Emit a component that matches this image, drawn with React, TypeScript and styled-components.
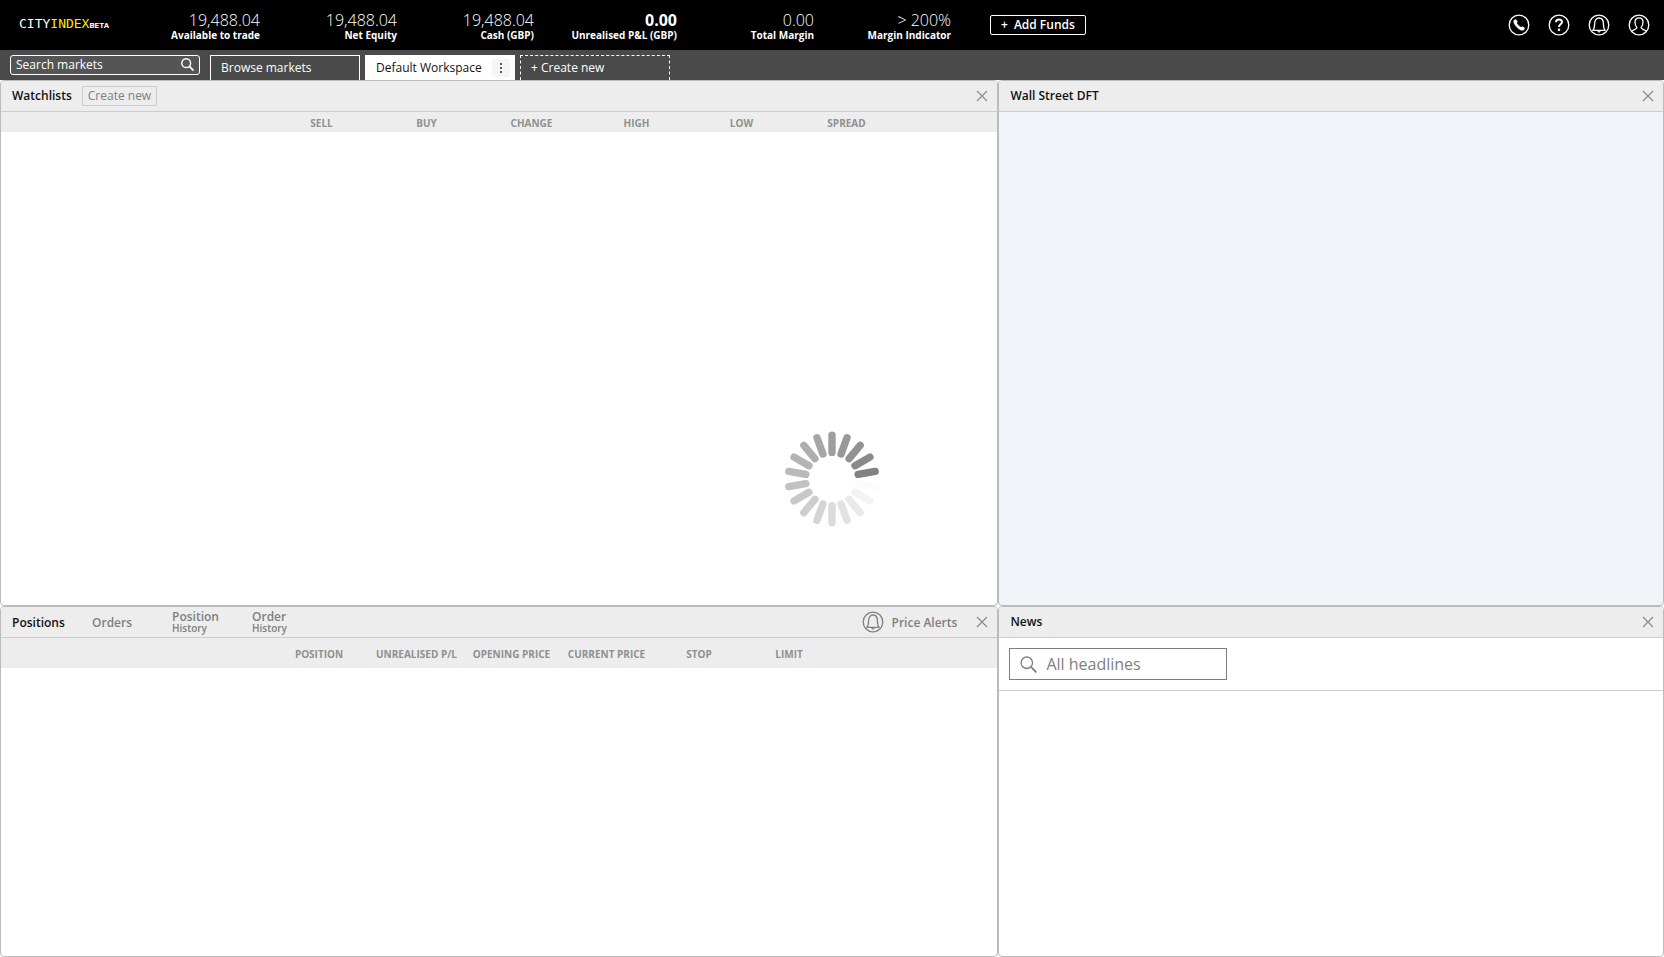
import React from "react";
import styled, { createGlobalStyle } from "styled-components";

const GlobalStyle = createGlobalStyle`
  *, *::before, *::after { box-sizing: border-box; }
  body { margin: 0; background: #fff; font-family: "Open Sans", "Noto Sans", sans-serif; font-size: 12px; color: #111; }
  button, input { font: inherit; margin: 0; }
  button { cursor: pointer; }
`;

const Page = styled.div`
  display: flex;
  flex-direction: column;
  min-height: 100vh;
`;

const TopBar = styled.header`
  display: flex;
  align-items: center;
  height: 50px;
  background: #000;
  color: #fff;
`;

const Logo = styled.a`
  flex: none;
  width: 123px;
  padding-left: 19px;
  color: #fff;
  font: 13px/20px "DejaVu Sans Mono", monospace;
  text-decoration: none;
  white-space: nowrap;
`;
const LogoAccent = styled.span`
  color: #ffe800;
`;
const LogoTag = styled.span`
  font: 700 8px/20px Roboto, sans-serif;
`;

const Metrics = styled.dl`
  display: flex;
  margin: 0;
`;
const Metric = styled.div<{ $wide?: boolean }>`
  display: flex;
  flex-direction: column-reverse;
  width: ${(p) => (p.$wide ? 143 : 137)}px;
  text-align: right;
  white-space: nowrap;
`;
const MetricLabel = styled.dt`
  font-size: 10px;
  line-height: 11px;
  font-weight: 700;
`;
const MetricValue = styled.dd<{ $strong?: boolean }>`
  margin: 0;
  font-size: 16px;
  line-height: 20px;
  font-weight: ${(p) => (p.$strong ? 700 : 300)};
`;

const AddFunds = styled.button`
  flex: none;
  height: 20px;
  margin-left: 39px;
  padding: 0 10px;
  border: 1px solid #fff;
  border-radius: 2px;
  background: transparent;
  color: #fff;
  font-weight: 600;
  line-height: 16px;
`;
const Plus = styled.span`
  margin-right: 6px;
`;

const HeaderIcons = styled.nav`
  display: flex;
  gap: 18px;
  margin-left: auto;
  padding-right: 14px;
`;
const IconButton = styled.button`
  display: flex;
  padding: 0;
  border: 0;
  background: transparent;
  color: inherit;
`;

const WorkspaceBar = styled.div`
  display: flex;
  align-items: flex-end;
  gap: 5px;
  height: 30px;
  padding-left: 10px;
  background: #4a4a4a;
`;
const MarketSearch = styled.label`
  display: flex;
  align-items: center;
  align-self: flex-start;
  width: 190px;
  height: 20px;
  margin: 5px 5px 0 0;
  padding: 0 5px 1px;
  border: 1px solid #fff;
  border-radius: 3px;
  background: #555;
  color: #fff;
`;
const SearchInput = styled.input`
  flex: 1;
  min-width: 0;
  padding: 0;
  border: 0;
  outline: 0;
  background: transparent;
  color: inherit;
  &::placeholder { color: inherit; opacity: 1; }
`;

const Tab = styled.button<{ $kind: "plain" | "active" | "new" }>`
  display: flex;
  align-items: center;
  justify-content: space-between;
  width: 150px;
  height: 25px;
  padding: 0 4px 1px 10px;
  border: 1px ${(p) => (p.$kind === "new" ? "dashed" : "solid")} #fff;
  border-bottom: 0;
  background: ${(p) => (p.$kind === "active" ? "#fff" : "transparent")};
  color: ${(p) => (p.$kind === "active" ? "#111" : "#fff")};
  white-space: nowrap;
`;
const TabMenu = styled.span`
  display: flex;
  align-items: center;
  justify-content: center;
  width: 18px;
  height: 18px;
  border-radius: 2px;
  background: #f5f5f5;
  color: #555;
`;

const Workspace = styled.main`
  flex: 1;
  display: grid;
  grid-template-columns: 3fr 2fr;
  grid-template-rows: 3fr 2fr;
`;
const Panel = styled.section<{ $tint?: boolean }>`
  display: flex;
  flex-direction: column;
  min-width: 0;
  overflow: hidden;
  border: 1px solid #bbb;
  border-radius: 4px;
  background: ${(p) => (p.$tint ? "#f0f3f7" : "#fff")};
`;
const PanelHead = styled.div`
  display: flex;
  align-items: center;
  height: 31px;
  padding: 0 9px 0 11px;
  border-bottom: 1px solid #ccc;
  background: #ededed;
`;
const PanelTitle = styled.h2`
  margin: 0;
  font-size: 12px;
  line-height: 16px;
  font-weight: 600;
`;
const OutlineButton = styled.button`
  height: 20px;
  margin-left: 10px;
  padding: 0 5px;
  border: 1px solid #ccc;
  border-radius: 1px;
  background: transparent;
  color: #808080;
  line-height: 16px;
`;
const HeadActions = styled.div`
  display: flex;
  align-items: center;
  gap: 19px;
  margin-left: auto;
  color: #808080;
`;
const AlertsButton = styled(IconButton)`
  align-items: center;
  gap: 8px;
  font-weight: 600;
`;

const PanelTabs = styled.div`
  display: flex;
  align-items: center;
`;
const PanelTab = styled.button<{ $active?: boolean }>`
  width: 80px;
  padding: 0;
  border: 0;
  background: transparent;
  color: ${(p) => (p.$active ? "#111" : "#808080")};
  font-weight: 600;
  line-height: 13px;
  text-align: left;
`;
const TabSub = styled.span`
  display: block;
  padding-bottom: 2px;
  font-size: 10px;
  line-height: 10px;
`;

const DataTable = styled.table`
  width: 100%;
  border-collapse: collapse;
  table-layout: fixed;
`;
const HeadRow = styled.tr<{ $height: number }>`
  height: ${(p) => p.$height}px;
  background: #ededed;
`;
const HeadCell = styled.th`
  padding: 1px 0 0;
  color: #909090;
  font-size: 10px;
  line-height: 14px;
  font-weight: 700;
  text-align: center;
  white-space: nowrap;
`;

const NewsFilter = styled.div`
  height: 53px;
  padding: 10px;
  border-bottom: 1px solid #ccc;
`;
const NewsSearch = styled.label`
  display: flex;
  align-items: center;
  gap: 9px;
  width: 218px;
  height: 32px;
  padding: 0 10px;
  border: 1px solid #808080;
  color: #808080;
  font-size: 16px;
`;

const Loader = styled.div`
  position: fixed;
  inset: 0;
  display: flex;
  align-items: center;
  justify-content: center;
  pointer-events: none;
`;

const SearchIcon = ({ size, stroke }: { size: number; stroke: number }) => (
  <svg width={size} height={size} viewBox="0 0 16 16" fill="none" stroke="currentColor" strokeWidth={stroke} aria-hidden>
    <circle cx="6.4" cy="6.4" r="5.4" />
    <path d="M10.3 10.3 15.4 15.4" strokeWidth={stroke + 0.5} />
  </svg>
);

const CloseButton = ({ label }: { label: string }) => (
  <IconButton aria-label={label}>
    <svg width="12" height="12" viewBox="0 0 12 12" stroke="#888" strokeWidth="1.1" aria-hidden>
      <path d="M1 1 11 11M11 1 1 11" />
    </svg>
  </IconButton>
);

const RoundIcon = ({ children }: { children: React.ReactNode }) => (
  <svg width="22" height="22" viewBox="0 0 22 22" fill="none" stroke="currentColor" strokeWidth="1.3" strokeLinejoin="round" aria-hidden>
    <circle cx="11" cy="11" r="9.8" />
    {children}
  </svg>
);

const bell = (
  <>
    <path d="M4.8 16.4C6.6 14.6 6.6 13 6.6 9.8C6.6 6.4 8.4 4 11 4S15.4 6.4 15.4 9.8C15.4 13 15.4 14.6 17.2 16.4Z" />
    <path d="M9.6 17.2H12.4L11 18.6Z" fill="currentColor" strokeWidth="0.6" />
  </>
);

const spokes = Array.from({ length: 18 }, (_, i) => ({
  angle: 80 - i * 20,
  shade: [130, 138, 146, 152, 158, 166, 174, 180, 186, 194, 200, 206, 212, 219, 226, 233, 243, 252][i],
}));

const metrics = [
  { label: "Available to trade", value: "19,488.04" },
  { label: "Net Equity", value: "19,488.04" },
  { label: "Cash (GBP)", value: "19,488.04" },
  { label: "Unrealised P&L (GBP)", value: "0.00", strong: true },
  { label: "Total Margin", value: "0.00" },
  { label: "Margin Indicator", value: "> 200%" },
];

const watchColumns = ["SELL", "BUY", "CHANGE", "HIGH", "LOW", "SPREAD"].map((name) => ({ name, width: 105 }));
const positionColumns = [
  { name: "POSITION", width: 100 },
  { name: "UNREALISED P/L", width: 95 },
  { name: "OPENING PRICE", width: 95 },
  { name: "CURRENT PRICE", width: 95 },
  { name: "STOP", width: 90 },
  { name: "LIMIT", width: 90 },
];

const ColumnHeads = ({ columns, height, label }: { columns: { name: string; width: number }[]; height: number; label: string }) => (
  <DataTable aria-label={label}>
    <colgroup>
      <col width={268} />
      {columns.map((c) => (
        <col key={c.name} width={c.width} />
      ))}
      <col />
    </colgroup>
    <thead>
      <HeadRow $height={height}>
        <td />
        {columns.map((c) => (
          <HeadCell key={c.name} scope="col">{c.name}</HeadCell>
        ))}
        <td />
      </HeadRow>
    </thead>
  </DataTable>
);

export default function App() {
  return (
    <Page>
      <GlobalStyle />
      <TopBar>
        <Logo href="#">
          CITY<LogoAccent>INDEX</LogoAccent><LogoTag>BETA</LogoTag>
        </Logo>
        <Metrics>
          {metrics.map((m) => (
            <Metric key={m.label} $wide={m.strong}>
              <MetricLabel>{m.label}</MetricLabel>
              <MetricValue $strong={m.strong}>{m.value}</MetricValue>
            </Metric>
          ))}
        </Metrics>
        <AddFunds><Plus>+</Plus>Add Funds</AddFunds>
        <HeaderIcons aria-label="Account">
          <IconButton aria-label="Contact">
            <RoundIcon>
              <path d="M5.9 6.6C7 4.9 8.2 5 9.2 7.2C9.6 8.2 8.5 8.8 8.9 9.5C9.7 11 11 12.2 12.5 13C13.4 13.4 14 12.4 14.9 12.8C17 13.8 17.2 14.8 15.6 15.9C14 17 11.8 16 9.4 13.8C6.4 10.9 5 8.2 5.9 6.6Z" fill="currentColor" strokeWidth="0.4" />
            </RoundIcon>
          </IconButton>
          <IconButton aria-label="Help">
            <RoundIcon>
              <path d="M8 8.2C8 4.6 14 4.6 14 8.1C14 10.4 11 10.3 11 13" strokeWidth="2" />
              <circle cx="11" cy="15.8" r="1.3" fill="currentColor" stroke="none" />
            </RoundIcon>
          </IconButton>
          <IconButton aria-label="Notifications">
            <RoundIcon>{bell}</RoundIcon>
          </IconButton>
          <IconButton aria-label="Profile">
            <RoundIcon>
              <path d="M3.6 17.2C5.2 15.4 9 15.4 9 13.6C7.4 12 7 10 7 8C7 5.4 8.6 3.8 11 3.8S15 5.4 15 8C15 10 14.6 12 13 13.6C13 15.4 16.8 15.4 18.4 17.2" />
            </RoundIcon>
          </IconButton>
        </HeaderIcons>
      </TopBar>

      <WorkspaceBar>
        <MarketSearch>
          <SearchInput type="text" placeholder="Search markets" aria-label="Search markets" />
          <SearchIcon size={13} stroke={1.8} />
        </MarketSearch>
        <Tab $kind="plain">Browse markets</Tab>
        <Tab $kind="active">
          Default Workspace
          <TabMenu>
            <svg width="2" height="10" viewBox="0 0 2 10" fill="currentColor" aria-hidden>
              <path d="M0 0H2V2H0ZM0 4H2V6H0ZM0 8H2V10H0Z" />
            </svg>
          </TabMenu>
        </Tab>
        <Tab $kind="new">+ Create new</Tab>
      </WorkspaceBar>

      <Workspace>
        <Panel>
          <PanelHead>
            <PanelTitle>Watchlists</PanelTitle>
            <OutlineButton>Create new</OutlineButton>
            <HeadActions><CloseButton label="Close watchlists" /></HeadActions>
          </PanelHead>
          <ColumnHeads columns={watchColumns} height={20} label="Watchlist" />
        </Panel>

        <Panel $tint>
          <PanelHead>
            <PanelTitle>Wall Street DFT</PanelTitle>
            <HeadActions><CloseButton label="Close chart" /></HeadActions>
          </PanelHead>
        </Panel>

        <Panel>
          <PanelHead>
            <PanelTabs>
              <PanelTab $active>Positions</PanelTab>
              <PanelTab>Orders</PanelTab>
              <PanelTab>Position<TabSub>History</TabSub></PanelTab>
              <PanelTab>Order<TabSub>History</TabSub></PanelTab>
            </PanelTabs>
            <HeadActions>
              <AlertsButton>
                <RoundIcon>{bell}</RoundIcon>
                Price Alerts
              </AlertsButton>
              <CloseButton label="Close positions" />
            </HeadActions>
          </PanelHead>
          <ColumnHeads columns={positionColumns} height={30} label="Positions" />
        </Panel>

        <Panel>
          <PanelHead>
            <PanelTitle>News</PanelTitle>
            <HeadActions><CloseButton label="Close news" /></HeadActions>
          </PanelHead>
          <NewsFilter>
            <NewsSearch>
              <SearchIcon size={17} stroke={1.3} />
              <SearchInput type="text" placeholder="All headlines" aria-label="Filter headlines" />
            </NewsSearch>
          </NewsFilter>
        </Panel>
      </Workspace>

      <Loader role="status" aria-label="Loading">
        <svg width="96" height="96" viewBox="-48 -48 96 96" strokeWidth="7.4" strokeLinecap="round">
          {spokes.map((s) => (
            <path key={s.angle} d="M0-26.6V-43.8" stroke={`rgb(${s.shade},${s.shade},${s.shade})`} transform={`rotate(${s.angle})`} />
          ))}
        </svg>
      </Loader>
    </Page>
  );
}
